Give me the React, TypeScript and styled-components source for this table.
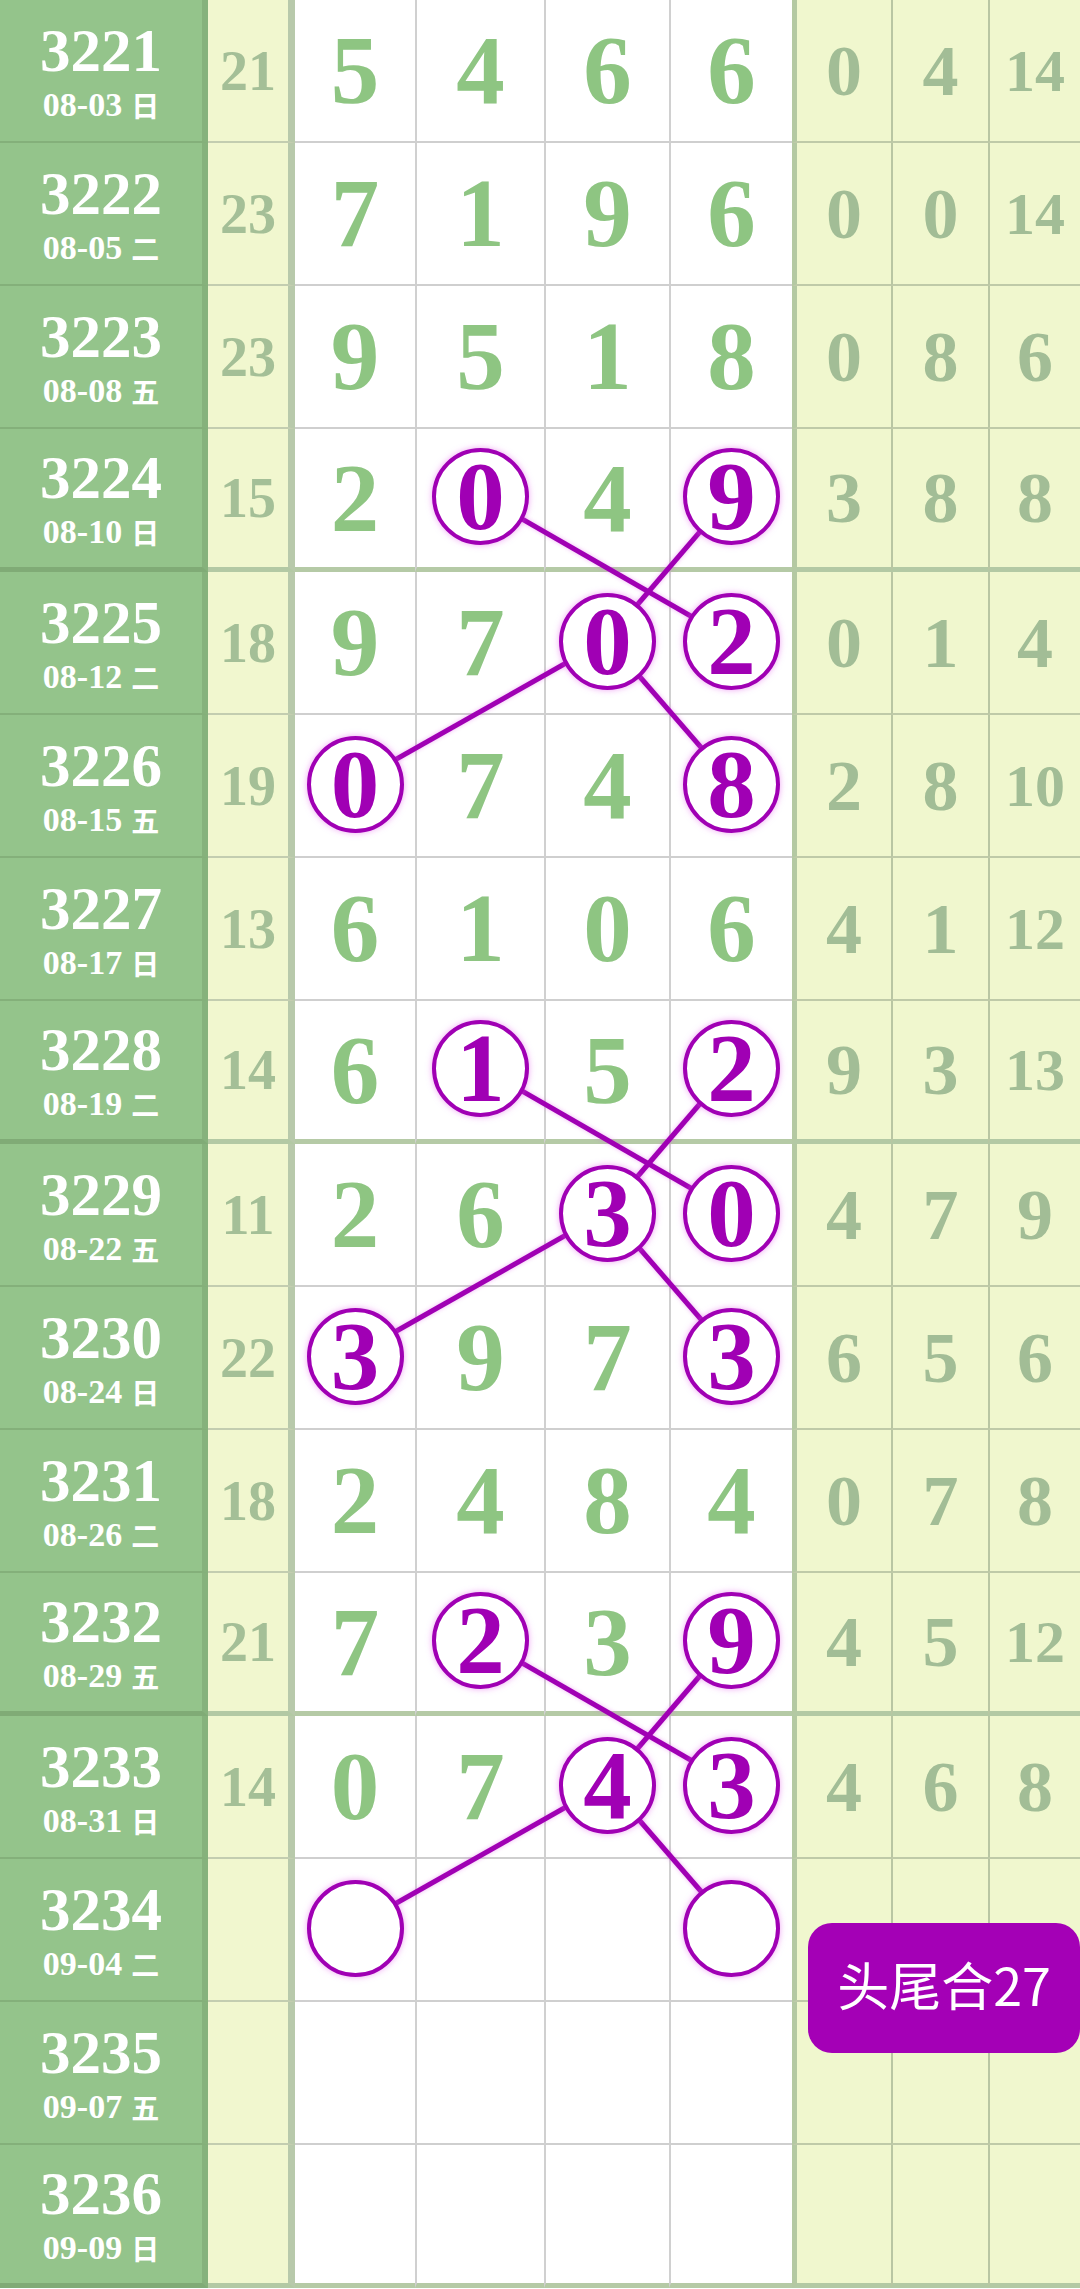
import React from 'react'
import styled, { createGlobalStyle } from 'styled-components'

const GlobalStyle = createGlobalStyle`
  html, body {
    margin: 0;
    padding: 0;
    background: #ffffff;
  }
  body {
    width: 1080px;
    height: 2289px;
    overflow: hidden;
  }
`

const PURPLE = '#a000b4'
const ROW_H = 143
const DIGIT_X = [355, 480.5, 607.5, 731.5]

type Draw = {
  issue: string
  date: string
  week: string
  sum?: string
  digits?: string[]
  marks?: number[]
  stats?: string[]
}

const draws: Draw[] = [
  { issue: '3221', date: '08-03', week: '日', sum: '21', digits: ['5', '4', '6', '6'], stats: ['0', '4', '14'] },
  { issue: '3222', date: '08-05', week: '二', sum: '23', digits: ['7', '1', '9', '6'], stats: ['0', '0', '14'] },
  { issue: '3223', date: '08-08', week: '五', sum: '23', digits: ['9', '5', '1', '8'], stats: ['0', '8', '6'] },
  { issue: '3224', date: '08-10', week: '日', sum: '15', digits: ['2', '0', '4', '9'], marks: [1, 3], stats: ['3', '8', '8'] },
  { issue: '3225', date: '08-12', week: '二', sum: '18', digits: ['9', '7', '0', '2'], marks: [2, 3], stats: ['0', '1', '4'] },
  { issue: '3226', date: '08-15', week: '五', sum: '19', digits: ['0', '7', '4', '8'], marks: [0, 3], stats: ['2', '8', '10'] },
  { issue: '3227', date: '08-17', week: '日', sum: '13', digits: ['6', '1', '0', '6'], stats: ['4', '1', '12'] },
  { issue: '3228', date: '08-19', week: '二', sum: '14', digits: ['6', '1', '5', '2'], marks: [1, 3], stats: ['9', '3', '13'] },
  { issue: '3229', date: '08-22', week: '五', sum: '11', digits: ['2', '6', '3', '0'], marks: [2, 3], stats: ['4', '7', '9'] },
  { issue: '3230', date: '08-24', week: '日', sum: '22', digits: ['3', '9', '7', '3'], marks: [0, 3], stats: ['6', '5', '6'] },
  { issue: '3231', date: '08-26', week: '二', sum: '18', digits: ['2', '4', '8', '4'], stats: ['0', '7', '8'] },
  { issue: '3232', date: '08-29', week: '五', sum: '21', digits: ['7', '2', '3', '9'], marks: [1, 3], stats: ['4', '5', '12'] },
  { issue: '3233', date: '08-31', week: '日', sum: '14', digits: ['0', '7', '4', '3'], marks: [2, 3], stats: ['4', '6', '8'] },
  { issue: '3234', date: '09-04', week: '二', marks: [0, 3] },
  { issue: '3235', date: '09-07', week: '五' },
  { issue: '3236', date: '09-09', week: '日' },
]

// each block of four draws ends with a heavier rule
const isBlockEnd = (i: number) => i % 4 === 3

const rowCenter = (i: number) => i * ROW_H + (ROW_H - (isBlockEnd(i) ? 5 : 2)) / 2

// head/tail links: top row of each block into the next two rows
const links: [number, number, number, number][] = []
;[3, 7, 11].forEach((r) => {
  links.push([r, 1, r + 1, 3])
  links.push([r, 3, r + 1, 2])
  links.push([r + 1, 2, r + 2, 0])
  links.push([r + 1, 2, r + 2, 3])
})

const Board = styled.div`
  position: relative;
  width: 1080px;
  height: 2289px;
  overflow: hidden;
`

const Row = styled.div`
  display: grid;
  grid-template-columns: 208px 87px 120px 129px 125px 123px 99px 97px 92px;
  height: ${ROW_H}px;
`

const cellBase = `
  box-sizing: border-box;
  display: flex;
  align-items: center;
  justify-content: center;
  font-family: 'Liberation Serif', 'Noto Sans CJK SC', serif;
  font-weight: 700;
  line-height: 1;
`

const IssueCell = styled.div<{ $thick: boolean }>`
  ${cellBase}
  flex-direction: column;
  gap: 7px;
  background: #94c48b;
  color: #ffffff;
  border-right: 6px solid #86b27c;
  border-bottom: ${(p) => (p.$thick ? '5px solid #80ab76' : '2px solid #84b07a')};
`

const IssueNo = styled.span`
  font-size: 61px;
`

const IssueDate = styled.span`
  display: flex;
  align-items: center;
  gap: 9px;
  font-size: 34px;
`

const Week = styled.span`
  font-family: 'Noto Sans CJK SC', sans-serif;
  font-weight: 700;
  font-size: 28px;
`

const SumCell = styled.div<{ $thick: boolean }>`
  ${cellBase}
  background: #f1f7cf;
  color: #a4bf97;
  font-size: 56px;
  border-right: 7px solid #b8c9ab;
  border-bottom: ${(p) => (p.$thick ? '5px solid #b3c9a4' : '2px solid #c3cdb0')};
`

const DigitCell = styled.div<{ $thick: boolean; $first: boolean }>`
  ${cellBase}
  background: #ffffff;
  color: #8ec582;
  font-size: 97px;
  border-left: ${(p) => (p.$first ? 'none' : '2px solid #d0d0d0')};
  border-bottom: ${(p) => (p.$thick ? '5px solid #b5caa6' : '2px solid #cfcfcf')};
`

const Ring = styled.span`
  position: relative;
  z-index: 2;
  box-sizing: border-box;
  width: 97px;
  height: 97px;
  border: 4.5px solid ${PURPLE};
  border-radius: 50%;
  background: #ffffff;
  box-shadow: 0 0 6px rgba(225, 90, 235, 0.55);
  display: flex;
  align-items: center;
  justify-content: center;
  color: ${PURPLE};
  margin-top: -3px;
`

const StatCell = styled.div<{ $thick: boolean; $first: boolean; $small: boolean }>`
  ${cellBase}
  background: #f0f7ce;
  color: #a2bd96;
  font-size: ${(p) => (p.$small ? '60px' : '72px')};
  border-left: ${(p) => (p.$first ? '5px solid #b4c9a2' : '2px solid #b9c6a3')};
  border-bottom: ${(p) => (p.$thick ? '5px solid #b3c9a4' : '2px solid #bfcaa8')};
`

const LinkLayer = styled.svg`
  position: absolute;
  top: 0;
  left: 0;
  z-index: 1;
  pointer-events: none;
  filter: drop-shadow(0 0 2px rgba(225, 90, 235, 0.45));
`

const Badge = styled.div`
  position: absolute;
  left: 808px;
  top: 1923px;
  z-index: 3;
  box-sizing: border-box;
  width: 272px;
  height: 130px;
  padding-bottom: 10px;
  border-radius: 24px;
  background: #a400b6;
  color: #ffffff;
  display: flex;
  align-items: center;
  justify-content: center;
  font-family: 'Noto Sans CJK SC', sans-serif;
  font-size: 52px;
`

const App = () => {
  return (
    <>
      <GlobalStyle />
      <Board>
        {draws.map((d, i) => {
          const thick = isBlockEnd(i)
          return (
            <Row key={d.issue}>
              <IssueCell $thick={thick}>
                <IssueNo>{d.issue}</IssueNo>
                <IssueDate>
                  {d.date}
                  <Week>{d.week}</Week>
                </IssueDate>
              </IssueCell>
              <SumCell $thick={thick}>{d.sum}</SumCell>
              {[0, 1, 2, 3].map((c) => (
                <DigitCell key={c} $thick={thick} $first={c === 0}>
                  {d.marks?.includes(c) ? <Ring>{d.digits?.[c]}</Ring> : d.digits?.[c]}
                </DigitCell>
              ))}
              {[0, 1, 2].map((c) => (
                <StatCell key={c} $thick={thick} $first={c === 0} $small={(d.stats?.[c] ?? '').length > 1}>
                  {d.stats?.[c]}
                </StatCell>
              ))}
            </Row>
          )
        })}

        <LinkLayer width={1080} height={ROW_H * 16} viewBox={`0 0 1080 ${ROW_H * 16}`}>
          {links.map(([r1, c1, r2, c2], k) => (
            <line
              key={k}
              x1={DIGIT_X[c1]}
              y1={rowCenter(r1) - 3}
              x2={DIGIT_X[c2]}
              y2={rowCenter(r2) - 3}
              stroke={PURPLE}
              strokeWidth={5}
            />
          ))}
        </LinkLayer>

        <Badge>头尾合27</Badge>
      </Board>
    </>
  )
}

export default App
